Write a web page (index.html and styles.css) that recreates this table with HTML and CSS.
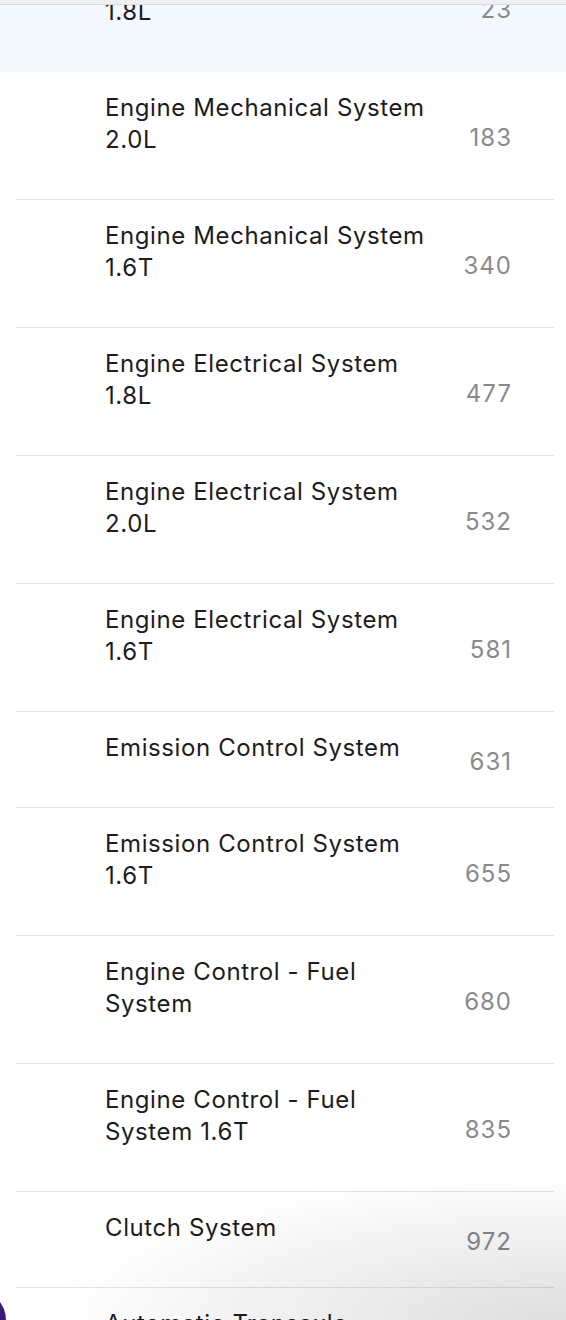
FILE: index.html
```html
<!DOCTYPE html>
<html lang="en">
<head>
    <meta charset="UTF-8">
    <meta name="viewport" content="width=device-width, initial-scale=1.0">
    <title>Service Manual - Contents</title>
    <link rel="stylesheet" href="styles.css">
</head>
<body>

<div class="top-bar"></div>

<ul class="toc-list">
    <li class="toc-item active">
        <span class="toc-title">Engine Mechanical System 1.8L</span>
        <span class="toc-page">23</span>
    </li>
    <li class="toc-item">
        <span class="toc-title">Engine Mechanical System 2.0L</span>
        <span class="toc-page">183</span>
    </li>
    <li class="toc-item">
        <span class="toc-title">Engine Mechanical System 1.6T</span>
        <span class="toc-page">340</span>
    </li>
    <li class="toc-item">
        <span class="toc-title">Engine Electrical System 1.8L</span>
        <span class="toc-page">477</span>
    </li>
    <li class="toc-item">
        <span class="toc-title">Engine Electrical System 2.0L</span>
        <span class="toc-page">532</span>
    </li>
    <li class="toc-item">
        <span class="toc-title">Engine Electrical System 1.6T</span>
        <span class="toc-page">581</span>
    </li>
    <li class="toc-item">
        <span class="toc-title">Emission Control System</span>
        <span class="toc-page">631</span>
    </li>
    <li class="toc-item">
        <span class="toc-title">Emission Control System 1.6T</span>
        <span class="toc-page">655</span>
    </li>
    <li class="toc-item">
        <span class="toc-title">Engine Control - Fuel System</span>
        <span class="toc-page">680</span>
    </li>
    <li class="toc-item">
        <span class="toc-title">Engine Control - Fuel System 1.6T</span>
        <span class="toc-page">835</span>
    </li>
    <li class="toc-item">
        <span class="toc-title">Clutch System</span>
        <span class="toc-page">972</span>
    </li>
    <li class="toc-item">
        <span class="toc-title">Automatic Transaxle</span>
        <span class="toc-page">1003</span>
    </li>
</ul>

<div class="bottom-shade"></div>
<div class="dock-edge"></div>

</body>
</html>
```

FILE: styles.css
```css
body {
    font-family: Inter, "Noto Sans", sans-serif;
    background-color: #fff;
    color: #1c1c1e;
    margin: 0;
    padding: 0;
    overflow: hidden;
}

/* strip of the toolbar that is still visible at the top */
.top-bar {
    position: fixed;
    top: 0;
    left: 0;
    right: 0;
    height: 4px;
    background-color: #efefef;
    border-bottom: 1px solid #d8dde3;
    z-index: 2;
}

.toc-list {
    list-style: none;
    margin: -56px 0 0;
    padding: 0;
}

.toc-item {
    display: flex;
    align-items: center;
    margin: 0 12px 0 16px;
    padding: 0 43px 0 89px;
    border-bottom: 1px solid #e4e4e6;
    font-size: 24px;
    line-height: 32px;
    letter-spacing: 0.6px;
}

.toc-item.active {
    margin: 0;
    padding: 0 55px 1px 105px;
    background-color: #f3f8fd;
    border-bottom: none;
}

.toc-title {
    flex: 0 0 335px;
    padding: 20px 0 43px;
}

.toc-page {
    flex: 1;
    text-align: right;
    color: #8a8a8e;
    letter-spacing: 1px;
    margin-right: -1px;
    padding-top: 4px;
}

/* soft shadow of the floating panel below */
.bottom-shade {
    position: fixed;
    left: 0;
    right: 0;
    bottom: 0;
    height: 160px;
    background: radial-gradient(ellipse 520px 150px at 100% 100%, rgba(0, 0, 0, 0.13), rgba(0, 0, 0, 0) 100%);
    pointer-events: none;
}

.dock-edge {
    position: fixed;
    left: -40px;
    bottom: -30px;
    width: 46px;
    height: 60px;
    border-top-right-radius: 30px;
    background-color: #3a1a78;
}
```
